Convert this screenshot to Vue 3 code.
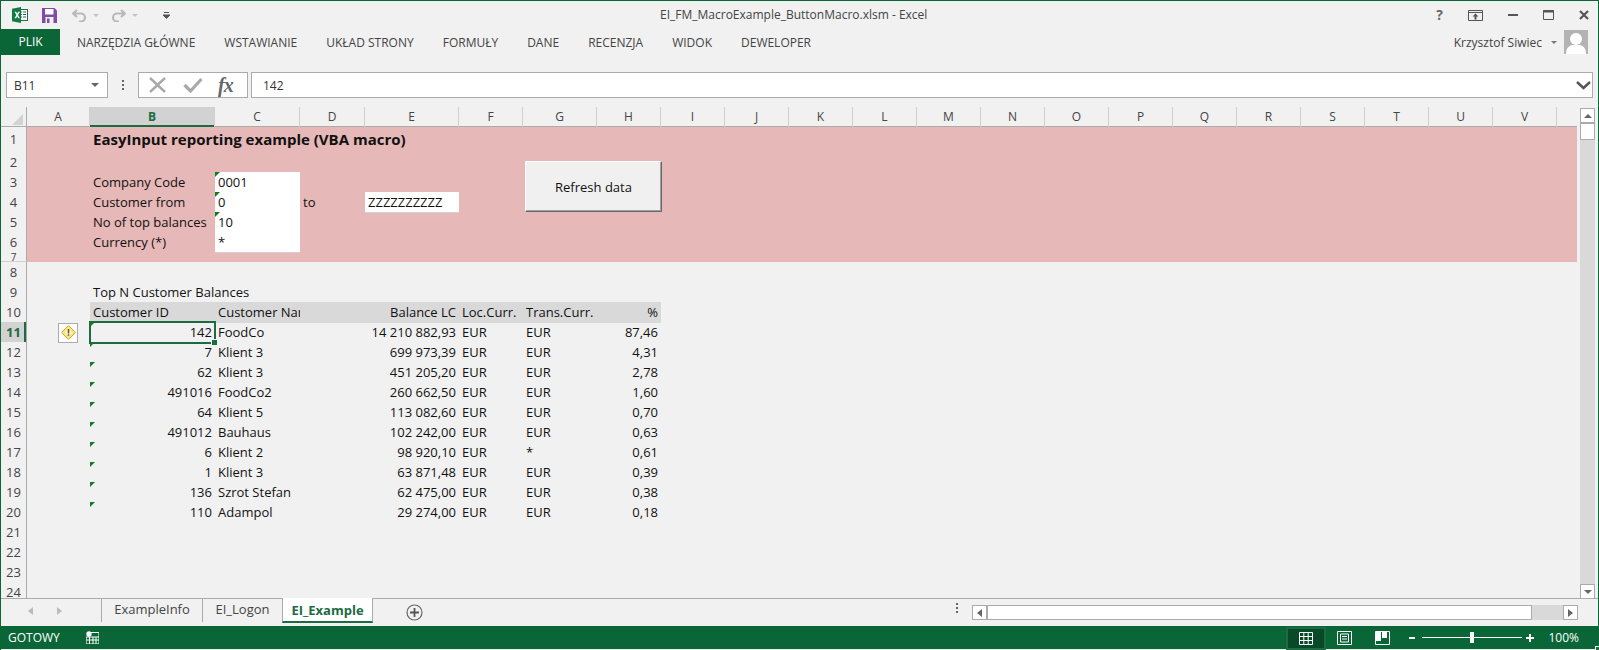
<script setup>
const columns = [
  { k: 'A' }, { k: 'B', sel: true }, { k: 'C' }, { k: 'D' }, { k: 'E' }, { k: 'F' }, { k: 'G' }, { k: 'H' },
  { k: 'I' }, { k: 'J' }, { k: 'K' }, { k: 'L' }, { k: 'M' }, { k: 'N' }, { k: 'O' }, { k: 'P' },
  { k: 'Q' }, { k: 'R' }, { k: 'S' }, { k: 'T' }, { k: 'U' }, { k: 'V' }
]
const tabs = ['NARZĘDZIA GŁÓWNE', 'WSTAWIANIE', 'UKŁAD STRONY', 'FORMUŁY', 'DANE', 'RECENZJA', 'WIDOK', 'DEWELOPER']
const balances = [
  ['142', 'FoodCo', '14 210 882,93', 'EUR', 'EUR', '87,46'],
  ['7', 'Klient 3', '699 973,39', 'EUR', 'EUR', '4,31'],
  ['62', 'Klient 3', '451 205,20', 'EUR', 'EUR', '2,78'],
  ['491016', 'FoodCo2', '260 662,50', 'EUR', 'EUR', '1,60'],
  ['64', 'Klient 5', '113 082,60', 'EUR', 'EUR', '0,70'],
  ['491012', 'Bauhaus', '102 242,00', 'EUR', 'EUR', '0,63'],
  ['6', 'Klient 2', '98 920,10', 'EUR', '*', '0,61'],
  ['1', 'Klient 3', '63 871,48', 'EUR', 'EUR', '0,39'],
  ['136', 'Szrot Stefan', '62 475,00', 'EUR', 'EUR', '0,38'],
  ['110', 'Adampol', '29 274,00', 'EUR', 'EUR', '0,18']
]
const form = [
  { n: 3, label: 'Company Code', value: '0001', mark: true },
  { n: 4, label: 'Customer from', value: '0', mark: true, to: true },
  { n: 5, label: 'No of top balances', value: '10', mark: true },
  { n: 6, label: 'Currency (*)', value: '*', mark: false }
]
</script>

<template>
  <div class="window">
    <header class="titlebar">
      <div class="qat">
        <svg class="xl" width="16" height="16" viewBox="0 0 16 16">
          <rect x="6" y="2.5" width="9.5" height="11" fill="#fff" stroke="#1d7044"/>
          <path d="M8 5h2M11 5h3M8 7.5h2M11 7.5h3M8 10h2M11 10h3" stroke="#1d7044" stroke-width="1.2"/>
          <path d="M0 1.8 9 0v16L0 14.2z" fill="#0f7a43"/>
          <path d="M2.4 4.8h1.8l1 2 1-2H8L6 8l2 3.2H6.200l-1-2-1 2H2.400l2-3.200z" fill="#fff"/>
        </svg>
        <svg class="save" width="15" height="15" viewBox="0 0 15 15">
          <path d="M0 0h12.500L15 2.500V15H0z" fill="#7f4da8"/>
          <rect x="3" y="1" width="8.500" height="5.500" fill="#fff"/>
          <rect x="3.500" y="9" width="8" height="6" fill="#f1f1f1"/>
          <rect x="5" y="10.500" width="2.500" height="4.500" fill="#7f4da8"/>
        </svg>
        <svg class="undo" width="15" height="13" viewBox="0 0 15 13">
          <path d="M5 1 1 4.500 5 8M1.500 4.500H9a4 4 0 0 1 0 8H7" fill="none" stroke="#b9b9b9" stroke-width="2.200"/>
        </svg>
        <span class="caret dim"></span>
        <svg class="redo" width="15" height="13" viewBox="0 0 15 13">
          <path d="M10 1l4 3.500L10 8M13.500 4.500H6a4 4 0 0 0 0 8h2" fill="none" stroke="#b9b9b9" stroke-width="2.200"/>
        </svg>
        <span class="caret dim"></span>
        <svg class="more" width="7" height="7" viewBox="0 0 7 7">
          <path d="M1 .5h5M0 3h7L3.500 6.500z" stroke="#555" fill="#555" stroke-width="1"/>
        </svg>
      </div>
      <div class="doc-title">EI_FM_MacroExample_ButtonMacro.xlsm - Excel</div>
      <div class="win-btns">
        <span class="help">?</span>
        <svg width="15" height="11" viewBox="0 0 15 11">
          <path d="M.5.500h14v10H.500zM1 2.500h13" fill="none" stroke="#555"/>
          <path d="M7.500 3.500l3 3H8.500v3h-2v-3h-2z" fill="#555"/>
        </svg>
        <svg width="10" height="2" viewBox="0 0 10 2"><rect width="10" height="2" fill="#555"/></svg>
        <svg width="11" height="10" viewBox="0 0 11 10"><path d="M.500.500h10v9H.500z" fill="none" stroke="#555"/><rect x=".500" width="10" height="2.500" fill="#555"/></svg>
        <svg width="10" height="10" viewBox="0 0 10 10"><path d="M1 1l8 8M9 1l-8 8" stroke="#555" stroke-width="2.200"/></svg>
      </div>
    </header>

    <nav class="ribbon">
      <span class="file">PLIK</span>
      <ul class="tabs">
        <li v-for="t in tabs" :key="t">{{ t }}</li>
      </ul>
      <div class="user">
        <span>Krzysztof Siwiec</span>
        <span class="caret"></span>
        <svg class="avatar" width="24" height="24" viewBox="0 0 24 24">
          <rect width="24" height="24" fill="#b3b3b3"/>
          <circle cx="12" cy="9" r="6" fill="#fff"/>
          <path d="M2 24c0-5 2-8 6-9h8c4 1 6 4 6 9z" fill="#fff"/>
        </svg>
      </div>
    </nav>

    <section class="formula">
      <div class="namebox"><span>B11</span><span class="caret big"></span></div>
      <span class="vdots"></span>
      <div class="fxbox">
        <svg width="20" height="18" viewBox="0 0 20 18"><path d="M2 2l15 14M17 2 2 16" stroke="#a9a9a9" stroke-width="2.400"/></svg>
        <svg width="20" height="16" viewBox="0 0 20 16"><path d="M1.500 8l6 6 11-12" fill="none" stroke="#a9a9a9" stroke-width="3.200"/></svg>
        <span class="fx">fx</span>
      </div>
      <div class="input">
        <span>142</span>
        <svg width="15" height="9" viewBox="0 0 15 9"><path d="M1 1l6.500 6L14 1" fill="none" stroke="#555" stroke-width="2.400"/></svg>
      </div>
    </section>

    <section class="sheet">
      <div class="grid">
        <div class="line colhead">
          <div class="corner"><i></i></div>
          <div v-for="c in columns" :key="c.k" class="ch" :class="{ sel: c.sel }">{{ c.k }}</div>
          <div></div>
        </div>

        <div class="line pink tall"><div class="rh">1</div><div></div><div class="c title">EasyInput reporting example (VBA macro)</div></div>
        <div class="line pink"><div class="rh">2</div></div>
        <div v-for="f in form" :key="f.n" class="line pink">
          <div class="rh">{{ f.n }}</div>
          <div></div>
          <div class="c">{{ f.label }}</div>
          <div class="c white" :class="{ mark: f.mark }">{{ f.value }}</div>
          <div v-if="f.to" class="c">to</div>
          <div v-if="f.to" class="c white e">ZZZZZZZZZZ</div>
        </div>
        <div class="line pink r7"><div class="rh">7</div></div>
        <div class="line"><div class="rh">8</div></div>
        <div class="line"><div class="rh">9</div><div></div><div class="c">Top N Customer Balances</div></div>
        <div class="line"><div class="rh">10</div><div></div>
          <div class="c head">Customer ID</div>
          <div class="c head">Customer Name</div>
          <div class="c head"></div>
          <div class="c head right">Balance LC</div>
          <div class="c head">Loc.Curr.</div>
          <div class="c head">Trans.Curr.</div>
          <div class="c head right">%</div>
        </div>
        <div v-for="(b, i) in balances" :key="i" class="line">
          <div class="rh" :class="{ sel: i === 0 }">{{ 11 + i }}</div>
          <div class="a-cell">
            <span v-if="i === 0" class="warn">
              <svg width="15" height="15" viewBox="0 0 15 15">
                <path d="M7.500.500l7 7-7 7-7-7z" fill="#fbe38a" stroke="#d9a81c"/>
                <path d="M7.500 3.500l4 4-4 4-4-4z" fill="#fff7cc"/>
                <rect x="6.700" y="4" width="1.600" height="4.500" fill="#6b5a1c"/>
                <rect x="6.700" y="9.300" width="1.600" height="1.600" fill="#6b5a1c"/>
              </svg>
            </span>
          </div>
          <div class="c right mark" :class="{ active: i === 0 }">{{ b[0] }}</div>
          <div class="c">{{ b[1] }}</div>
          <div></div>
          <div class="c right">{{ b[2] }}</div>
          <div class="c">{{ b[3] }}</div>
          <div class="c">{{ b[4] }}</div>
          <div class="c right">{{ b[5] }}</div>
        </div>
        <div v-for="n in [21, 22, 23, 24]" :key="n" class="line"><div class="rh">{{ n }}</div></div>

        <button class="macro">Refresh data</button>
      </div>

      <div class="vscroll">
        <span class="sbtn"><i class="up"></i></span>
        <span class="vthumb"></span>
        <span class="vtrack"></span>
        <span class="sbtn"><i class="down"></i></span>
      </div>
    </section>

    <section class="tabbar">
      <div class="navs"><i class="tl"></i><i class="tr"></i></div>
      <span class="tab">ExampleInfo</span>
      <span class="tab">EI_Logon</span>
      <span class="tab on">EI_Example</span>
      <svg class="plus" width="17" height="17" viewBox="0 0 17 17">
        <circle cx="8.500" cy="8.500" r="7.500" fill="none" stroke="#666" stroke-width="1.200"/>
        <path d="M8.500 4v9M4 8.500h9" stroke="#555" stroke-width="1.800"/>
      </svg>
      <span class="gap"></span>
      <span class="vdots small"></span>
      <div class="hscroll">
        <span class="sbtn"><i class="tl dark"></i></span>
        <span class="hthumb"></span>
        <span class="htrack"></span>
        <span class="sbtn"><i class="tr dark"></i></span>
      </div>
    </section>

    <footer class="status">
      <span class="ready">GOTOWY</span>
      <svg class="rec" width="13" height="13" viewBox="0 0 13 13">
        <circle cx="3" cy="3" r="2.700" fill="#fff"/>
        <path d="M5 1.500h8V13H0V6h13M0 9h13M3.500 6v7M7 6v7M10 6v7" fill="none" stroke="#fff"/>
      </svg>
      <span class="gap"></span>
      <span class="view active">
        <svg width="14" height="13" viewBox="0 0 14 13"><path d="M.500.500h13v12H.500zM.500 4.500h13M.500 8.500h13M4.800.500v12M9.200.500v12" fill="none" stroke="#fff"/></svg>
      </span>
      <span class="view">
        <svg width="15" height="14" viewBox="0 0 15 14"><path d="M.500.500h14v13H.500zM3.500 3h8v8h-8zM5 5.500h5M5 8h5" fill="none" stroke="#fff"/></svg>
      </span>
      <span class="view">
        <svg width="15" height="14" viewBox="0 0 15 14"><path d="M.500.500h14v13H.500z" fill="none" stroke="#fff"/><path d="M1 1h5v9H1zM7 1h5v6H7z" fill="#fff"/></svg>
      </span>
      <div class="zoom">
        <i class="minus"></i>
        <div class="slider"><i></i></div>
        <i class="plusz"></i>
      </div>
      <span class="pct">100%</span>
    </footer>
  </div>
</template>

<style>
html, body { margin: 0; padding: 0; overflow: hidden; }
</style>

<style scoped>
.window {
  box-sizing: border-box;
  width: 1599px;
  height: 650px;
  border: 1px solid #0a6537;
  border-bottom: 0;
  background: #f1f1f1;
  color: #444;
  display: flex;
  flex-direction: column;
  font-family: "Open Sans", "Noto Sans", sans-serif;
  overflow: hidden;
}
.titlebar { height: 28px; display: flex; align-items: center; position: relative; flex: none; }
.qat { display: flex; align-items: center; padding-left: 11px; }
.qat .save { margin-left: 14px; }
.qat .undo { margin-left: 15px; }
.qat .redo { margin-left: 0; }
.qat .more { margin-left: 13px; }
.caret { width: 0; height: 0; border: 3px solid transparent; border-top: 3px solid #777; border-bottom: 0; display: inline-block; }
.caret.dim { border-top-color: #c4c4c4; margin: 0 12px 0 6px; }
.doc-title { position: absolute; left: 659px; top: 6px; font-size: 12px; line-height: 16px; color: #444; white-space: nowrap; }
.win-btns { margin-left: auto; display: flex; align-items: center; gap: 0; padding-right: 9px; }
.win-btns > * { margin-left: 25px; }
.help { font-weight: 700; font-size: 14px; line-height: 14px; color: #666; }

.ribbon { height: 26px; display: flex; align-items: center; flex: none; font-size: 12px; }
.file { width: 59px; height: 26px; line-height: 25px; background: #0a6537; color: #fff; text-align: center; }
.tabs { list-style: none; display: flex; margin: 0; padding: 0 0 0 17px; gap: 29px; white-space: nowrap; }
.user { margin-left: auto; display: flex; align-items: center; padding-right: 10px; font-size: 12px; }
.user .caret { margin: 0 7px 0 9px; }

.formula { height: 26px; margin-top: 17px; display: flex; align-items: stretch; flex: none; padding-left: 5px; padding-right: 5px; font-size: 12px; color: #333; }
.namebox { box-sizing: border-box; width: 102px; background: #fff; border: 1px solid #ababab; display: flex; align-items: center; justify-content: space-between; padding: 0 8px 0 7px; }
.caret.big { border-width: 4px; border-top: 4px solid #666; border-bottom: 0; }
.vdots { width: 2px; height: 10px; margin: 8px 14px 0 14px; background: repeating-linear-gradient(#666 0 2px, transparent 2px 4px); }
.vdots.small { margin: 4px 14px 0 0; }
.fxbox { box-sizing: border-box; width: 110px; background: #fff; border: 1px solid #ababab; display: flex; align-items: center; gap: 15px; padding-left: 9px; }
.fx { font-family: "Liberation Serif", serif; font-style: italic; font-weight: 700; font-size: 20px; color: #666; letter-spacing: -1px; }
.input { flex: 1; box-sizing: border-box; margin-left: 3px; background: #fff; border: 1px solid #ababab; display: flex; align-items: center; justify-content: space-between; padding: 0 1px 0 11px; }

.sheet { height: 492px; margin-top: 9px; display: flex; flex: none; overflow: hidden; }
.grid { width: 1576px; position: relative; overflow: hidden; font-size: 13px; color: #111; }
.line {
  display: grid;
  grid-template-columns: 26px 63px 125px 85px 65px 94px 64px 74px 64px repeat(14, 64px) 20px;
  height: 20px;
  line-height: 20px;
  white-space: nowrap;
}
.colhead { height: 20px; color: #444; font-size: 12px; border-bottom: 1px solid #ababab; box-sizing: border-box; }
.corner { position: relative; border-right: 1px solid #ababab; box-sizing: border-box; }
.corner i { position: absolute; right: 3px; bottom: 2px; border-style: solid; border-width: 0 0 11px 11px; border-color: transparent transparent #d3d3d3 transparent; }
.ch { text-align: center; border-right: 1px solid #cfcfcf; box-sizing: border-box; }
.ch.sel { background: #d2d2d2; color: #1c6b42; font-weight: 700; box-shadow: inset 0 -2px #1c6b42; }
.rh { box-sizing: border-box; border-right: 1px solid #ababab; border-bottom: 1px solid #d0d0d0; text-align: center; color: #444; font-size: 13px; background: #f1f1f1; }
.rh.sel { background: #d2d2d2; color: #1c6b42; font-weight: 700; box-shadow: inset -2px 0 #1c6b42; }
.pink { background: #e6b8b7; }
.tall { height: 25px; line-height: 25px; }
.r7 { height: 10px; line-height: 10px; }
.r7 .rh { font-size: 10px; overflow: hidden; }
.c { padding: 0 3px; position: relative; }
.title { font-weight: 700; font-size: 15px; grid-column: 3 / 9; }
.right { text-align: right; }
.white { background: #fff; border-bottom: 1px solid #d0d0d0; }
.white.e { grid-column: 6; }
.head { background: #d9d9d9; }
.mark::before { content: ""; position: absolute; left: 0; top: 0; border-style: solid; border-width: 5px 5px 0 0; border-color: #0f7a1f transparent transparent transparent; }
.active { outline: 2px solid #1c6b42; outline-offset: -1px; z-index: 2; }
.active::after { content: ""; position: absolute; right: -3px; bottom: -3px; width: 5px; height: 5px; background: #1c6b42; border: 1px solid #f1f1f1; }
.a-cell { display: flex; justify-content: flex-end; align-items: center; padding-right: 12px; }
.warn { box-sizing: border-box; width: 20px; height: 20px; background: #fff; border: 1px solid #ababab; display: flex; align-items: center; justify-content: center; }
.macro {
  position: absolute; left: 524px; top: 54px; width: 137px; height: 51px;
  box-sizing: border-box; background: #f0f0f0; color: #111; font: 13px "Open Sans", sans-serif;
  border: 1px solid; border-color: #fff #696969 #696969 #fff; box-shadow: inset -1px -1px #a0a0a0; padding: 0;
}

.vscroll { width: 15px; margin-left: 3px; display: flex; flex-direction: column; padding-top: 1px; }
.sbtn { box-sizing: border-box; width: 15px; height: 15px; background: #fff; border: 1px solid #ababab; display: flex; align-items: center; justify-content: center; flex: none; }
.sbtn i { display: block; width: 0; height: 0; }
.up { border: 4px solid transparent; border-bottom: 4px solid #666; border-top: 0; }
.down { border: 4px solid transparent; border-top: 4px solid #666; border-bottom: 0; }
.vthumb { box-sizing: border-box; height: 17px; background: #fff; border: 1px solid #ababab; }
.vtrack { flex: 1; background: #d9d9d9; }

.tabbar { height: 27px; display: flex; align-items: flex-start; flex: none; border-top: 1px solid #ababab; font-size: 13px; color: #444; margin-top: -1px; position: relative; }
.navs { width: 100px; display: flex; gap: 24px; padding: 8px 0 0 27px; box-sizing: border-box; }
.tl { display: block; width: 0; height: 0; border: 4px solid transparent; border-right: 5px solid #bbb; border-left: 0; }
.tr { display: block; width: 0; height: 0; border: 4px solid transparent; border-left: 5px solid #bbb; border-right: 0; }
.tl.dark { border-right-color: #666; }
.tr.dark { border-left-color: #666; }
.tab { box-sizing: border-box; height: 23px; line-height: 21px; margin-top: 0; text-align: center; position: relative; }
.tab:nth-of-type(1) { width: 101px; border-left: 1px solid #ababab; }
.tab:nth-of-type(2) { width: 80px; border-left: 1px solid #ababab; }
.tab.on { width: 91px; background: #fff; color: #1c6b42; font-weight: 700; border-bottom: 2px solid #1c6b42; border-left: 1px solid #ababab; border-right: 1px solid #ababab; margin-top: -1px; height: 25px; line-height: 24px; }
.plus { margin: 5px 0 0 33px; }
.gap { flex: 1; }
.hscroll { display: flex; width: 606px; margin: 6px 20px 0 0; height: 15px; }
.hthumb { box-sizing: border-box; flex: 0 0 545px; background: #fff; border: 1px solid #ababab; }
.htrack { flex: 1; background: #d9d9d9; }

.status { height: 23px; flex: none; background: #0a6537; margin: 0 -1px; display: flex; align-items: center; color: #fff; font-size: 12px; }
.ready { margin-left: 8px; }
.rec { margin-left: 26px; }
.view { width: 38px; height: 21px; display: flex; align-items: center; justify-content: center; margin-top: 1px; }
.view.active { background: #084a28; }
.zoom { display: flex; align-items: center; margin-left: 8px; }
.minus { display: block; width: 6px; height: 2px; background: #fff; }
.slider { width: 100px; height: 1px; background: #fff; margin: 0 4px 0 7px; position: relative; }
.slider i { position: absolute; left: 48px; top: -5px; width: 4px; height: 11px; background: #fff; }
.plusz { display: block; width: 8px; height: 8px; background: linear-gradient(#fff, #fff) center/8px 2px no-repeat, linear-gradient(#fff, #fff) center/2px 8px no-repeat; }
.pct { margin: 0 20px 0 14px; }
</style>
